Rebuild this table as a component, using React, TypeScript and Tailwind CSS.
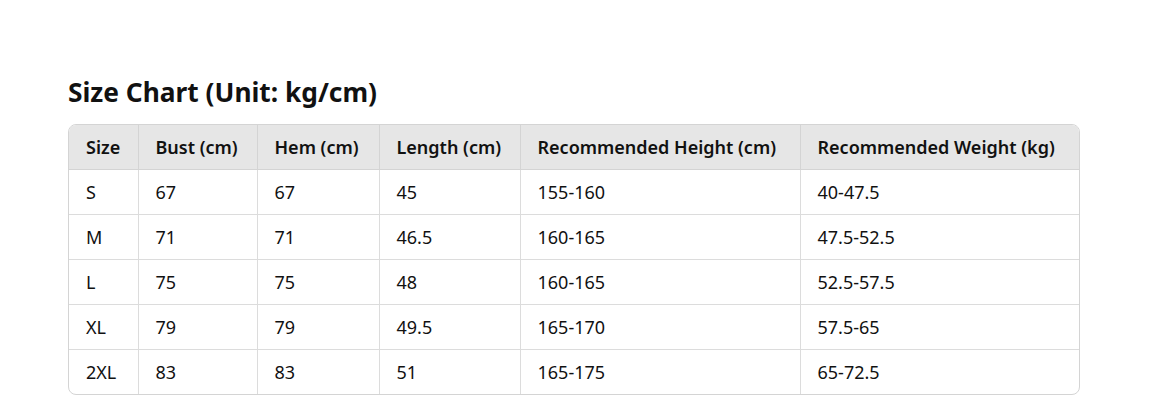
import React from "react";

const headers = ["Size", "Bust (cm)", "Hem (cm)", "Length (cm)", "Recommended Height (cm)", "Recommended Weight (kg)"];
const widths = ["w-[69px]", "w-[119px]", "w-[122px]", "w-[141px]", "w-[280px]", "w-[280px]"];
const rows = [
  ["S", "67", "67", "45", "155-160", "40-47.5"],
  ["M", "71", "71", "46.5", "160-165", "47.5-52.5"],
  ["L", "75", "75", "48", "160-165", "52.5-57.5"],
  ["XL", "79", "79", "49.5", "165-170", "57.5-65"],
  ["2XL", "83", "83", "51", "165-175", "65-72.5"],
];

export default function App() {
  return (
    <div className="w-[1167px] h-[413px] bg-white pl-[68px] pt-[74px] text-[#111]" style={{ fontFamily: '"Noto Sans", "Open Sans", sans-serif' }}>
      <h1 className="text-[26.3px] font-bold leading-[36px] mb-[14px]">Size Chart (Unit: kg/cm)</h1>
      <div className="w-[1012px] border border-[#d4d4d4] rounded-[8px] overflow-hidden">
        <table className="w-full table-fixed border-collapse text-[18px]">
          <colgroup>
            {widths.map((w, i) => (
              <col key={i} className={w} />
            ))}
          </colgroup>
          <thead>
            <tr className="bg-[#e6e6e6] h-[44px]">
              {headers.map((h, i) => (
                <th key={i} className={`text-left font-semibold px-[17px] pt-[2px] pb-0 border-[#d4d4d4] border-b ${i > 0 ? "border-l" : ""}`}>
                  {h}
                </th>
              ))}
            </tr>
          </thead>
          <tbody>
            {rows.map((r, ri) => (
              <tr key={ri} className="h-[45px]">
                {r.map((c, i) => (
                  <td key={i} className={`px-[17px] pt-[2px] pb-0 border-[#dcdcdc] ${ri < rows.length - 1 ? "border-b" : ""} ${i > 0 ? "border-l" : ""}`}>
                    {c}
                  </td>
                ))}
              </tr>
            ))}
          </tbody>
        </table>
      </div>
    </div>
  );
}
